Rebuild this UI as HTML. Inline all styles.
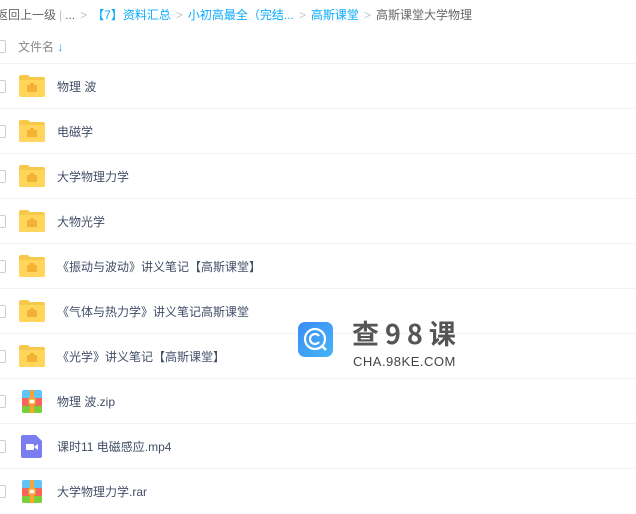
<!DOCTYPE html><html><head><meta charset="utf-8"><style>
body{margin:0;width:636px;height:512px;background:#fff;font-family:"Liberation Sans","Noto Sans CJK SC",sans-serif;position:relative;overflow:hidden;font-size:12px;color:#424e67}
.a{position:absolute;white-space:nowrap}
.bc{top:7px;left:-4px;color:#666;font-size:12px;line-height:16px}
.bc .l{color:#09aaff}.bc .s{color:#c0c4cc;margin:0 5px}
.cb{position:absolute;left:-7px;width:11px;height:11px;border:1px solid #ccd;border-radius:2px;background:#fff}
.row{position:absolute;left:0;width:636px;height:45px;border-top:1px solid #f0f2f7}
.row .t{position:absolute;left:57px;top:14px;font-size:12px;color:#424e67}
.fd{position:absolute;left:19px;top:11px;width:26px;height:22px}
</style></head><body>
<div class="a bc">返回上一级<span class="s" style="margin:0 3px">|</span>...<span class="s">&gt;</span><span class="l">【7】资料汇总</span><span class="s">&gt;</span><span class="l">小初高最全（完结...</span><span class="s">&gt;</span><span class="l">高斯课堂</span><span class="s">&gt;</span>高斯课堂大学物理</div>
<div class="cb" style="top:40px"></div>
<div class="a" style="left:18px;top:38px;color:#888">文件名 <span style="color:#09aaff;font-weight:bold">↓</span></div>
<div id="rows"></div>
<script></script>
<div class="row" style="top:63px"><div class="cb" style="top:16px"></div><svg class="fd" viewBox="0 0 26 22"><path d="M0 2a2 2 0 0 1 2-2h7l2 2h13a2 2 0 0 1 2 2v16a2 2 0 0 1-2 2H2a2 2 0 0 1-2-2z" fill="#f7c94b"/><path d="M0 5h26v15a2 2 0 0 1-2 2H2a2 2 0 0 1-2-2z" fill="#ffd55c"/><rect x="8" y="10" width="10" height="7" fill="#f4b234"/><rect x="11" y="8" width="4" height="2" fill="#f4b234"/></svg><div class="t">物理 波</div></div>
<div class="row" style="top:108px"><div class="cb" style="top:16px"></div><svg class="fd" viewBox="0 0 26 22"><path d="M0 2a2 2 0 0 1 2-2h7l2 2h13a2 2 0 0 1 2 2v16a2 2 0 0 1-2 2H2a2 2 0 0 1-2-2z" fill="#f7c94b"/><path d="M0 5h26v15a2 2 0 0 1-2 2H2a2 2 0 0 1-2-2z" fill="#ffd55c"/><rect x="8" y="10" width="10" height="7" fill="#f4b234"/><rect x="11" y="8" width="4" height="2" fill="#f4b234"/></svg><div class="t">电磁学</div></div>
<div class="row" style="top:153px"><div class="cb" style="top:16px"></div><svg class="fd" viewBox="0 0 26 22"><path d="M0 2a2 2 0 0 1 2-2h7l2 2h13a2 2 0 0 1 2 2v16a2 2 0 0 1-2 2H2a2 2 0 0 1-2-2z" fill="#f7c94b"/><path d="M0 5h26v15a2 2 0 0 1-2 2H2a2 2 0 0 1-2-2z" fill="#ffd55c"/><rect x="8" y="10" width="10" height="7" fill="#f4b234"/><rect x="11" y="8" width="4" height="2" fill="#f4b234"/></svg><div class="t">大学物理力学</div></div>
<div class="row" style="top:198px"><div class="cb" style="top:16px"></div><svg class="fd" viewBox="0 0 26 22"><path d="M0 2a2 2 0 0 1 2-2h7l2 2h13a2 2 0 0 1 2 2v16a2 2 0 0 1-2 2H2a2 2 0 0 1-2-2z" fill="#f7c94b"/><path d="M0 5h26v15a2 2 0 0 1-2 2H2a2 2 0 0 1-2-2z" fill="#ffd55c"/><rect x="8" y="10" width="10" height="7" fill="#f4b234"/><rect x="11" y="8" width="4" height="2" fill="#f4b234"/></svg><div class="t">大物光学</div></div>
<div class="row" style="top:243px"><div class="cb" style="top:16px"></div><svg class="fd" viewBox="0 0 26 22"><path d="M0 2a2 2 0 0 1 2-2h7l2 2h13a2 2 0 0 1 2 2v16a2 2 0 0 1-2 2H2a2 2 0 0 1-2-2z" fill="#f7c94b"/><path d="M0 5h26v15a2 2 0 0 1-2 2H2a2 2 0 0 1-2-2z" fill="#ffd55c"/><rect x="8" y="10" width="10" height="7" fill="#f4b234"/><rect x="11" y="8" width="4" height="2" fill="#f4b234"/></svg><div class="t">《振动与波动》讲义笔记【高斯课堂】</div></div>
<div class="row" style="top:288px"><div class="cb" style="top:16px"></div><svg class="fd" viewBox="0 0 26 22"><path d="M0 2a2 2 0 0 1 2-2h7l2 2h13a2 2 0 0 1 2 2v16a2 2 0 0 1-2 2H2a2 2 0 0 1-2-2z" fill="#f7c94b"/><path d="M0 5h26v15a2 2 0 0 1-2 2H2a2 2 0 0 1-2-2z" fill="#ffd55c"/><rect x="8" y="10" width="10" height="7" fill="#f4b234"/><rect x="11" y="8" width="4" height="2" fill="#f4b234"/></svg><div class="t">《气体与热力学》讲义笔记高斯课堂</div></div>
<div class="row" style="top:333px"><div class="cb" style="top:16px"></div><svg class="fd" viewBox="0 0 26 22"><path d="M0 2a2 2 0 0 1 2-2h7l2 2h13a2 2 0 0 1 2 2v16a2 2 0 0 1-2 2H2a2 2 0 0 1-2-2z" fill="#f7c94b"/><path d="M0 5h26v15a2 2 0 0 1-2 2H2a2 2 0 0 1-2-2z" fill="#ffd55c"/><rect x="8" y="10" width="10" height="7" fill="#f4b234"/><rect x="11" y="8" width="4" height="2" fill="#f4b234"/></svg><div class="t">《光学》讲义笔记【高斯课堂】</div></div>
<div class="row" style="top:378px"><div class="cb" style="top:16px"></div><svg style="position:absolute;left:22px;top:11px" width="20" height="23" viewBox="0 0 20 23"><rect width="20" height="23" rx="2" fill="#62c4f4"/><rect y="8" width="20" height="8" fill="#f4655a"/><path d="M0 16h20v5a2 2 0 0 1-2 2H2a2 2 0 0 1-2-2z" fill="#7ccd3c"/><rect x="8" y="0" width="4" height="23" fill="#f8a830"/><rect x="7" y="9" width="6" height="5" fill="#fff" stroke="#f8a830" stroke-width="1.5"/></svg><div class="t">物理 波.zip</div></div>
<div class="row" style="top:423px"><div class="cb" style="top:16px"></div><svg style="position:absolute;left:21px;top:11px" width="21" height="23" viewBox="0 0 21 23"><path d="M2 0h13l6 6v15a2 2 0 0 1-2 2H2a2 2 0 0 1-2-2V2a2 2 0 0 1 2-2z" fill="#7b7ef0"/><rect x="5" y="9" width="8" height="6" rx="1" fill="#fff"/><path d="M13 12l4-3v6z" fill="#fff"/></svg><div class="t">课时11 电磁感应.mp4</div></div>
<div class="row" style="top:468px"><div class="cb" style="top:16px"></div><svg style="position:absolute;left:22px;top:11px" width="20" height="23" viewBox="0 0 20 23"><rect width="20" height="23" rx="2" fill="#62c4f4"/><rect y="8" width="20" height="8" fill="#f4655a"/><path d="M0 16h20v5a2 2 0 0 1-2 2H2a2 2 0 0 1-2-2z" fill="#7ccd3c"/><rect x="8" y="0" width="4" height="23" fill="#f8a830"/><rect x="7" y="9" width="6" height="5" fill="#fff" stroke="#f8a830" stroke-width="1.5"/></svg><div class="t">大学物理力学.rar</div></div>
<svg style="position:absolute;left:298px;top:322px" width="35" height="35" viewBox="0 0 35 35"><defs><linearGradient id="g" x1="0" y1="0" x2="1" y2="1"><stop offset="0" stop-color="#3a8cf5"/><stop offset="1" stop-color="#46b4f7"/></linearGradient></defs><rect width="35" height="35" rx="7" fill="url(#g)"/><circle cx="17" cy="17" r="10" fill="none" stroke="#fff" stroke-width="2.2"/><path d="M21 14a5 5 0 1 0 0 6" fill="none" stroke="#fff" stroke-width="2.2"/><path d="M24 24l4 4" stroke="#fff" stroke-width="2.5"/></svg>
<div class="a" style="left:352px;top:318px;font-size:27px;font-weight:bold;color:#555;letter-spacing:6px;font-family:'Noto Sans CJK SC',sans-serif;line-height:30px">查98课</div>
<div class="a" style="left:353px;top:354px;font-size:13px;color:#444;letter-spacing:0.5px">CHA.98KE.COM</div>
</body></html>
